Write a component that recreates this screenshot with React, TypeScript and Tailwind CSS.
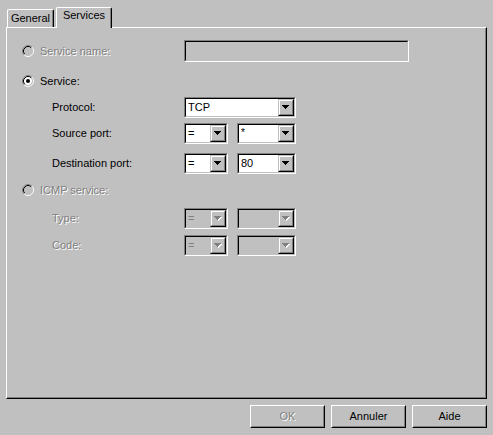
import React from "react";

const font = { fontFamily: '"Liberation Sans", Arial, sans-serif' };

function Arrow({ disabled }: { disabled?: boolean }) {
  const c = disabled ? "#808080" : "#000000";
  return (
    <svg width="8" height="5" viewBox="0 0 8 5" shapeRendering="crispEdges">
      {disabled && (
        <g fill="#ffffff">
          <rect x="1" y="1" width="7" height="1" />
          <rect x="2" y="2" width="5" height="1" />
          <rect x="3" y="3" width="3" height="1" />
          <rect x="4" y="4" width="1" height="1" />
        </g>
      )}
      <g fill={c}>
        <rect x="0" y="0" width="7" height="1" />
        <rect x="1" y="1" width="5" height="1" />
        <rect x="2" y="2" width="3" height="1" />
        <rect x="3" y="3" width="1" height="1" />
      </g>
    </svg>
  );
}

function Combo({
  className,
  value,
  disabled,
}: {
  className: string;
  value?: string;
  disabled?: boolean;
}) {
  return (
    <div
      className={`${className} h-[21px] flex border border-t-[#808080] border-l-[#808080] border-b-white border-r-white`}
    >
      <div
        className={`flex-1 flex border border-t-black border-l-black border-b-[#c0c0c0] border-r-[#c0c0c0] ${
          disabled ? "bg-[#c0c0c0]" : "bg-white"
        }`}
      >
        <div
          className={`flex-1 flex items-center pl-[2px] leading-[13px] ${
            disabled ? "text-[#808080]" : "text-black"
          }`}
        >
          {value === "*" ? <span className="self-start mt-[1px] text-[10px]">*</span> : value}
        </div>
        <div className="w-[16px] h-[17px] border border-t-[#c0c0c0] border-l-[#c0c0c0] border-b-black border-r-black">
          <div className="w-full h-full flex items-center justify-center bg-[#c0c0c0] border border-t-white border-l-white border-b-[#808080] border-r-[#808080]">
            <Arrow disabled={disabled} />
          </div>
        </div>
      </div>
    </div>
  );
}

function Radio({ checked, disabled }: { checked?: boolean; disabled?: boolean }) {
  return (
    <svg width="12" height="12" viewBox="0 0 12 12" className="shrink-0">
      <circle cx="6" cy="6" r="4" fill={disabled ? "#c0c0c0" : "#ffffff"} />
      <path d="M2.11 9.89 A5.5 5.5 0 0 1 9.89 2.11" stroke="#808080" strokeWidth="1" fill="none" />
      <path d="M9.89 2.11 A5.5 5.5 0 0 1 2.11 9.89" stroke="#ffffff" strokeWidth="1" fill="none" />
      <path d="M2.82 9.18 A4.5 4.5 0 0 1 9.18 2.82" stroke="#000000" strokeWidth="1" fill="none" />
      <path d="M9.18 2.82 A4.5 4.5 0 0 1 2.82 9.18" stroke="#c0c0c0" strokeWidth="1" fill="none" />
      {checked && <circle cx="6" cy="6" r="2" fill="#000000" />}
    </svg>
  );
}

const disabledText = "text-[#808080] [text-shadow:1px_1px_0_#ffffff]";

function Button({ label, disabled }: { label: string; disabled?: boolean }) {
  return (
    <div className="w-[75px] h-[23px] border border-t-white border-l-white border-b-black border-r-black">
      <div
        className={`w-full h-full flex items-center justify-center border border-t-[#c0c0c0] border-l-[#c0c0c0] border-b-[#808080] border-r-[#808080] ${
          disabled ? disabledText : "text-black"
        }`}
      >
        {label}
      </div>
    </div>
  );
}

export default function App() {
  return (
    <div
      className="w-[493px] h-[435px] bg-[#c0c0c0] flex flex-col text-[11px] leading-[13px] text-black overflow-hidden"
      style={font}
    >
      {/* Tab strip */}
      <div className="h-[20px] mt-[7px] pl-[7px] flex items-end relative z-10">
        <div className="w-[47px] h-[18px] border-t border-l border-r border-t-white border-l-white border-r-black rounded-tl-[2px] rounded-tr-[2px] shadow-[inset_-1px_0_0_#808080] flex justify-center pt-[2px]">
          General
        </div>
        <div className="ml-[2px] w-[56px] h-[21px] -mb-px bg-[#c0c0c0] border-t border-l border-r border-t-white border-l-white border-r-black rounded-tl-[2px] rounded-tr-[2px] shadow-[inset_-1px_0_0_#808080] flex justify-center pt-[1px]">
          Services
        </div>
      </div>

      {/* Panel */}
      <div className="ml-[6px] w-[481px] h-[372px] border border-t-white border-l-white border-b-black border-r-black shadow-[inset_-1px_-1px_0_#808080] flex flex-col">
        {/* Service name */}
        <div className="mt-[12px] h-[22px] flex items-center">
          <div className="w-[177px] pl-[15px] flex items-center gap-[6px]">
            <Radio disabled />
            <span className={disabledText}>Service name:</span>
          </div>
          <div className="w-[225px] h-[22px] border border-t-[#808080] border-l-[#808080] border-b-white border-r-white">
            <div className="w-full h-full bg-[#c0c0c0] border border-t-black border-l-black border-b-[#c0c0c0] border-r-[#c0c0c0]" />
          </div>
        </div>

        {/* Service */}
        <div className="mt-[8px] h-[22px] flex items-center">
          <div className="w-[177px] pl-[15px] flex items-center gap-[6px]">
            <Radio checked />
            <span>Service:</span>
          </div>
        </div>

        {/* Protocol */}
        <div className="mt-[5px] h-[21px] flex items-center">
          <div className="w-[177px] pl-[45px]">Protocol:</div>
          <Combo className="w-[112px]" value="TCP" />
        </div>

        {/* Source port */}
        <div className="mt-[5px] h-[21px] flex items-center">
          <div className="w-[177px] pl-[45px]">Source port:</div>
          <Combo className="w-[44px]" value="=" />
          <Combo className="ml-[9px] w-[59px]" value="*" />
        </div>

        {/* Destination port */}
        <div className="mt-[9px] h-[21px] flex items-center">
          <div className="w-[177px] pl-[45px]">Destination port:</div>
          <Combo className="w-[44px]" value="=" />
          <Combo className="ml-[9px] w-[59px]" value="80" />
        </div>

        {/* ICMP service */}
        <div className="mt-[5px] h-[22px] flex items-center">
          <div className="w-[177px] pl-[15px] flex items-center gap-[6px]">
            <Radio disabled />
            <span className={disabledText}>ICMP service:</span>
          </div>
        </div>

        {/* Type */}
        <div className="mt-[7px] h-[21px] flex items-center">
          <div className={`w-[177px] pl-[45px] ${disabledText}`}>Type:</div>
          <Combo className="w-[44px]" value="=" disabled />
          <Combo className="ml-[9px] w-[59px]" disabled />
        </div>

        {/* Code */}
        <div className="mt-[6px] h-[21px] flex items-center">
          <div className={`w-[177px] pl-[45px] ${disabledText}`}>Code:</div>
          <Combo className="w-[44px]" value="=" disabled />
          <Combo className="ml-[9px] w-[59px]" disabled />
        </div>
      </div>

      {/* Buttons */}
      <div className="mt-[6px] pr-[6px] flex justify-end gap-[6px]">
        <Button label="OK" disabled />
        <Button label="Annuler" />
        <Button label="Aide" />
      </div>
    </div>
  );
}
